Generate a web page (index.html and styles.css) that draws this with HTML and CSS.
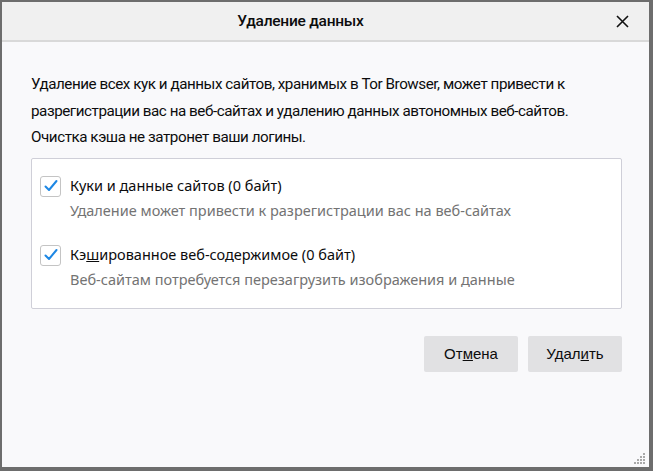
FILE: index.html
```html
<!DOCTYPE html>
<html lang="ru">
<head>
<meta charset="utf-8">
<title>Удаление данных</title>
<link rel="stylesheet" href="styles.css">
</head>
<body>
<div class="dialog">
  <div class="header">
    <div class="title">Удаление данных</div>
    <button class="close" aria-label="Закрыть">
      <svg width="13" height="13" viewBox="0 0 13 13"><path d="M1 1 L12 12 M12 1 L1 12" stroke="#111" stroke-width="1.6" fill="none"/></svg>
    </button>
  </div>
  <div class="content">
    <p class="intro">Удаление всех кук и данных сайтов, хранимых в Tor Browser, может привести к разрегистрации вас на веб-сайтах и удалению данных автономных веб-сайтов. Очистка кэша не затронет ваши логины.</p>
    <div class="group">
      <div class="option">
        <span class="check"><svg width="16" height="16" viewBox="0 0 16 16"><path d="M2.5 8.5 L6 12 L13.5 3" stroke="#1d87e4" stroke-width="2" fill="none" stroke-linecap="round" stroke-linejoin="round"/></svg></span>
        <div class="opt-text">
          <div class="label">Куки и <u>д</u>анные сайтов (0 байт)</div>
          <div class="desc">Удаление может привести к разрегистрации вас на веб-сайтах</div>
        </div>
      </div>
      <div class="option">
        <span class="check"><svg width="16" height="16" viewBox="0 0 16 16"><path d="M2.5 8.5 L6 12 L13.5 3" stroke="#1d87e4" stroke-width="2" fill="none" stroke-linecap="round" stroke-linejoin="round"/></svg></span>
        <div class="opt-text">
          <div class="label">Кэ<u>ш</u>ированное веб-содержимое (0 байт)</div>
          <div class="desc">Веб-сайтам потребуется перезагрузить изображения и данные</div>
        </div>
      </div>
    </div>
    <div class="buttons">
      <button class="btn">От<u>м</u>ена</button>
      <button class="btn">Удал<u>и</u>ть</button>
    </div>
  </div>
  <div class="grip">
    <svg width="12" height="12" viewBox="0 0 12 12" fill="#a9a9a9">
      <rect x="9" y="0" width="2" height="2"/>
      <rect x="6" y="3" width="2" height="2"/><rect x="9" y="3" width="2" height="2"/>
      <rect x="3" y="6" width="2" height="2"/><rect x="6" y="6" width="2" height="2"/><rect x="9" y="6" width="2" height="2"/>
      <rect x="0" y="9" width="2" height="2"/><rect x="3" y="9" width="2" height="2"/><rect x="6" y="9" width="2" height="2"/><rect x="9" y="9" width="2" height="2"/>
    </svg>
  </div>
</div>
</body>
</html>
```
FILE: styles.css
```css
html, body {
  margin: 0;
  padding: 0;
  height: 100%;
}
body {
  background: #6d6d6d;
  font-family: "Noto Sans", "Open Sans", sans-serif;
  color: #0c0c0d;
}
.dialog {
  position: relative;
  box-sizing: border-box;
  margin: 2px 4px 0 2px;
  width: 647px;
  height: 465px;
  background: #f9f9fb;
  display: flex;
  flex-direction: column;
}
.header {
  position: relative;
  height: 38px;
  padding-right: 50px;
  background: #f0f0f0;
  border-bottom: 2px solid #d9d9d9;
  display: flex;
  align-items: center;
  justify-content: center;
}
.title {
  font-family: "Roboto", sans-serif;
  font-weight: 500;
  font-size: 15.5px;
  letter-spacing: -0.25px;
  color: #0c0c0d;
}
.close {
  position: absolute;
  right: 20px;
  top: 13px;
  border: 0;
  padding: 0;
  background: none;
  width: 13px;
  height: 13px;
  display: flex;
}
.content {
  padding: 29px 0 0 29px;
  width: 591px;
}
.intro {
  margin: 0;
  font-family: "Roboto", sans-serif;
  font-size: 15.2px;
  line-height: 26.5px;
  letter-spacing: -0.45px;
  color: #0c0c0d;
}
.group {
  margin-top: 7px;
  background: #ffffff;
  border: 1px solid #cfcfd8;
  border-radius: 2px;
  padding: 14px 0 16px 8px;
  display: flex;
  flex-direction: column;
  gap: 19px;
}
.option {
  display: flex;
  gap: 9px;
}
.check {
  box-sizing: border-box;
  width: 21px;
  height: 21px;
  margin-top: 3px;
  border: 1px solid #c4c4c4;
  border-radius: 3px;
  background: #fff;
  display: flex;
  align-items: center;
  justify-content: center;
}
.label {
  font-size: 14.5px;
  line-height: 25px;
  color: #0c0c0d;
}
.desc {
  font-size: 14.5px;
  line-height: 25px;
  color: #737373;
}
.buttons {
  margin-top: 27px;
  display: flex;
  justify-content: flex-end;
  gap: 10px;
}
.btn {
  width: 94px;
  height: 36px;
  border: 0;
  border-radius: 2px;
  background: #e1e1e3;
  font-family: "Liberation Sans", Arial, sans-serif;
  font-size: 15px;
  color: #0c0c0d;
}
.grip {
  position: absolute;
  right: 3px;
  bottom: 2px;
  display: flex;
}
```
